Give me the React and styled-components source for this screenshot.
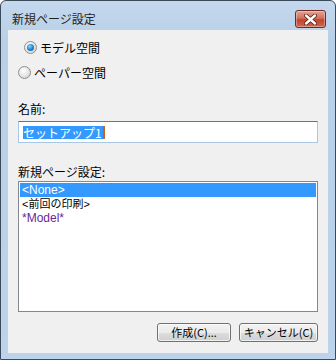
import React from 'react'
import styled, { createGlobalStyle } from 'styled-components'

const Global = createGlobalStyle`
  body {
    margin: 0;
    background: #ffffff;
    font-family: "Noto Sans CJK JP", "Liberation Sans", sans-serif;
    font-size: 12px;
    color: #000;
  }
`

const Window = styled.div`
  width: 336px;
  height: 360px;
  box-sizing: border-box;
  border: 1px solid #3b4a5a;
  border-radius: 6px 6px 0 0;
  background: linear-gradient(#c4d8ee, #b8d0e8 40px, #bcd3eb);
  display: flex;
  flex-direction: column;
  overflow: hidden;
`

const TitleBar = styled.div`
  height: 29px;
  display: flex;
  align-items: flex-start;
  justify-content: space-between;
  padding: 0 9px 0 11px;
`

const Title = styled.div`
  font-size: 12px;
  line-height: 14px;
  margin-top: 11px;
  color: #1e1e1e;
`

const CloseButton = styled.div`
  width: 31px;
  height: 18px;
  margin-top: 9px;
  box-sizing: border-box;
  border: 1px solid #6e2a22;
  border-radius: 3px;
  background: linear-gradient(#e4a394, #d0715e 45%, #c2432c 55%, #d0664e);
  box-shadow: inset 0 0 0 1px rgba(255, 255, 255, 0.35);
  display: flex;
  align-items: center;
  justify-content: center;
`

const Client = styled.div`
  margin: 0 7px 6px 7px;
  flex: 1;
  background: #f0f0f0;
  padding: 11px 10px 0 10px;
  display: flex;
  flex-direction: column;
`

const RadioRow = styled.label`
  display: flex;
  align-items: center;
  height: 13px;
  margin-left: ${p => p.$indent}px;
  margin-bottom: ${p => p.$gap}px;
  gap: 3px;
  line-height: 13px;
`

const RadioDot = styled.span`
  width: 13px;
  height: 13px;
  box-sizing: border-box;
  border-radius: 50%;
  border: 1px solid #8e8f8f;
  background: radial-gradient(circle at 40% 35%, #ffffff, #dcdcdc 70%, #c8c8c8);
  display: flex;
  align-items: center;
  justify-content: center;
  &::after {
    content: '';
    width: 7px;
    height: 7px;
    border-radius: 50%;
    display: ${p => (p.$checked ? 'block' : 'none')};
    background: radial-gradient(circle at 40% 35%, #8ad2ff, #1f7ec8 55%, #0d4f8e);
  }
`

const FieldLabel = styled.div`
  line-height: 14px;
  height: 14px;
  margin-top: ${p => p.$top}px;
`

const Colon = styled.span`
  color: #000;
`

const Input = styled.div`
  margin-top: 5px;
  height: 22px;
  box-sizing: border-box;
  border: 1px solid #a9c7e4;
  border-top-color: #3f7fbf;
  background: #fff;
  display: flex;
  align-items: center;
  padding-left: 4px;
`

const Selected = styled.span`
  background: #3399ff;
  color: #fff;
  line-height: 13px;
  height: 13px;
  padding-right: 1px;
`

const Caret = styled.span`
  width: 2px;
  height: 13px;
  background: #c8641a;
`

const ListBox = styled.div`
  margin-top: 2px;
  height: 131px;
  box-sizing: border-box;
  border: 1px solid #828790;
  background: #fff;
  padding: 1px;
`

const ListItem = styled.div`
  height: 14px;
  line-height: 14px;
  padding-left: 2px;
  overflow: hidden;
  background: ${p => (p.$selected ? '#3399ff' : 'transparent')};
  color: ${p => (p.$selected ? '#fff' : p.$color || '#000')};
  font-family: "Liberation Sans", "Noto Sans CJK JP", sans-serif;
  font-size: ${p => (p.$cjk ? 11 : 12)}px;
`

const ButtonRow = styled.div`
  display: flex;
  justify-content: flex-end;
  gap: 8px;
  margin-top: 11px;
`

const Button = styled.button`
  width: ${p => p.$w}px;
  height: 19px;
  box-sizing: border-box;
  border: 1px solid #707070;
  border-radius: 3px;
  background: linear-gradient(#f2f2f2, #ebebeb 50%, #dddddd 51%, #cfcfcf);
  box-shadow: inset 0 0 0 1px rgba(255, 255, 255, 0.7);
  font-family: "Noto Sans CJK JP", "Liberation Sans", sans-serif;
  font-size: 11px;
  line-height: 15px;
  padding: 0;
  color: #000;
`

const items = [
  { text: '<None>', selected: true },
  { text: '<前回の印刷>', cjk: true },
  { text: '*Model*', color: '#6a2894' },
]

export default function App() {
  return (
    <>
      <Global />
      <Window>
        <TitleBar>
          <Title>新規ページ設定</Title>
          <CloseButton>
            <svg width="13" height="11" viewBox="0 0 13 11">
              <path
                d="M2 1.5 L11 9.5 M11 1.5 L2 9.5"
                stroke="#5a1a12"
                strokeWidth="4"
                strokeLinecap="round"
              />
              <path
                d="M2 1.5 L11 9.5 M11 1.5 L2 9.5"
                stroke="#ffffff"
                strokeWidth="2.4"
                strokeLinecap="round"
              />
            </svg>
          </CloseButton>
        </TitleBar>
        <Client>
          <RadioRow $indent={6} $gap={12}>
            <RadioDot $checked />
            モデル空間
          </RadioRow>
          <RadioRow $indent={0} $gap={0}>
            <RadioDot />
            ペーパー空間
          </RadioRow>
          <FieldLabel $top={23}>
            名前<Colon>:</Colon>
          </FieldLabel>
          <Input>
            <Selected>セットアップ1</Selected>
            <Caret />
          </Input>
          <FieldLabel $top={22}>
            新規ページ設定<Colon>:</Colon>
          </FieldLabel>
          <ListBox>
            {items.map(it => (
              <ListItem
                key={it.text}
                $selected={it.selected}
                $color={it.color}
                $cjk={it.cjk}
              >
                {it.text}
              </ListItem>
            ))}
          </ListBox>
          <ButtonRow>
            <Button $w={74}>作成(C)...</Button>
            <Button $w={79}>キャンセル(C)</Button>
          </ButtonRow>
        </Client>
      </Window>
    </>
  )
}
